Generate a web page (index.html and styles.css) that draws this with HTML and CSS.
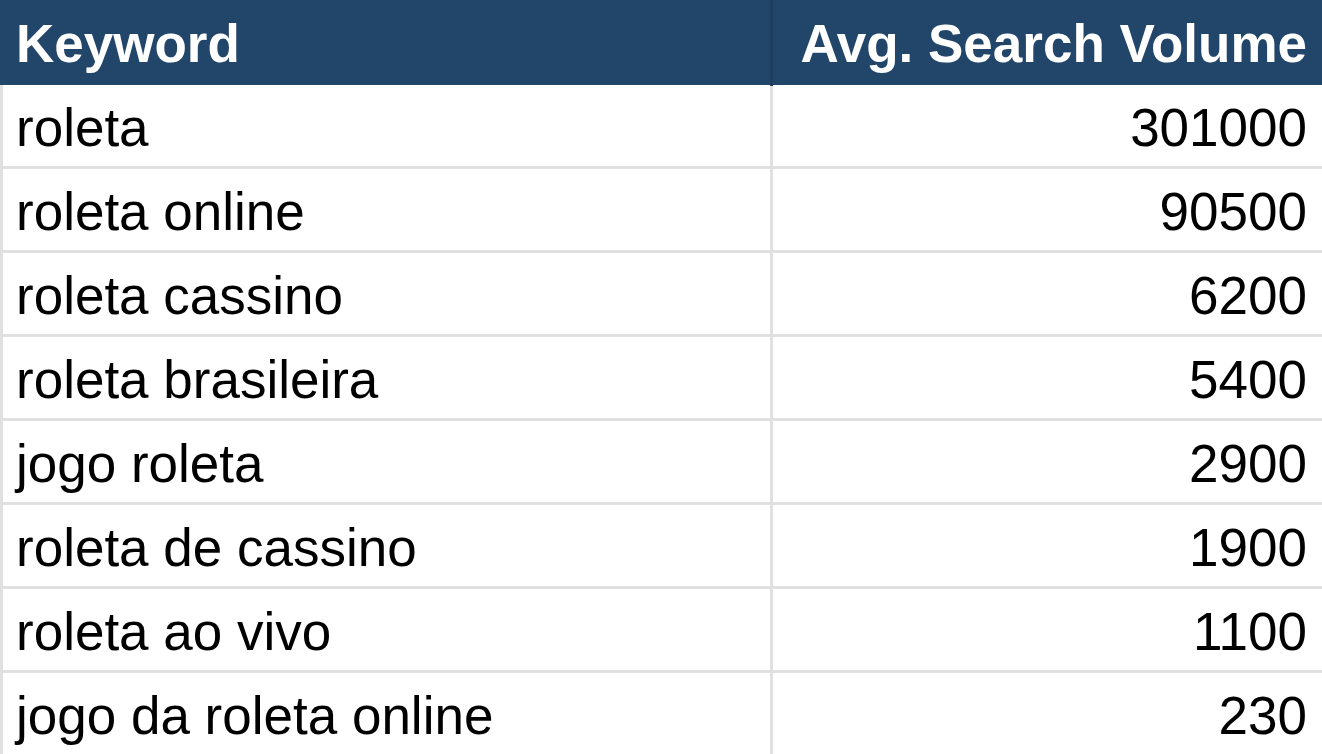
FILE: index.html
```html
<!DOCTYPE html>
<html>
<head>
<meta charset="utf-8">
<link rel="stylesheet" href="styles.css">
</head>
<body>
<div class="kw-table">
  <div class="row head">
    <div class="cell kw">Keyword</div>
    <div class="cell vol">Avg. Search Volume</div>
  </div>
  <div class="body">
    <div class="cell kw">roleta</div><div class="cell vol">301000</div>
    <div class="cell kw">roleta online</div><div class="cell vol">90500</div>
    <div class="cell kw">roleta cassino</div><div class="cell vol">6200</div>
    <div class="cell kw">roleta brasileira</div><div class="cell vol">5400</div>
    <div class="cell kw">jogo roleta</div><div class="cell vol">2900</div>
    <div class="cell kw">roleta de cassino</div><div class="cell vol">1900</div>
    <div class="cell kw">roleta ao vivo</div><div class="cell vol">1100</div>
    <div class="cell kw">jogo da roleta online</div><div class="cell vol">230</div>
  </div>
</div>
</body>
</html>
```
FILE: styles.css
```css
html, body {
  margin: 0;
  padding: 0;
  background: #ffffff;
}
body {
  font-family: "Liberation Sans", Arial, sans-serif;
  width: 1322px;
  height: 754px;
  overflow: hidden;
}
.kw-table {
  width: 1322px;
}
.head {
  display: grid;
  grid-template-columns: 770px 3px 1fr;
  height: 85px;
  background: #22456a;
  color: #ffffff;
  font-weight: bold;
  font-size: 53px;
  line-height: 85px;
}
.head .kw {
  padding-left: 16px;
  padding-top: 1px;
  border-right: 3px solid #203f60;
  grid-column: 1 / 3;
}
.head .vol {
  text-align: right;
  padding-right: 15px;
  padding-top: 1px;
}
.body {
  display: grid;
  grid-template-columns: 767px 1fr;
  grid-auto-rows: 81px;
  gap: 3px;
  padding-left: 3px;
  background: #e0e0e0;
  font-size: 53px;
  line-height: 81px;
  color: #000000;
}
.body .cell {
  background: #ffffff;
  padding-top: 2px;
  box-sizing: border-box;
  white-space: nowrap;
}
.body .kw {
  padding-left: 13px;
}
.body .vol {
  text-align: right;
  padding-right: 15px;
}
```
